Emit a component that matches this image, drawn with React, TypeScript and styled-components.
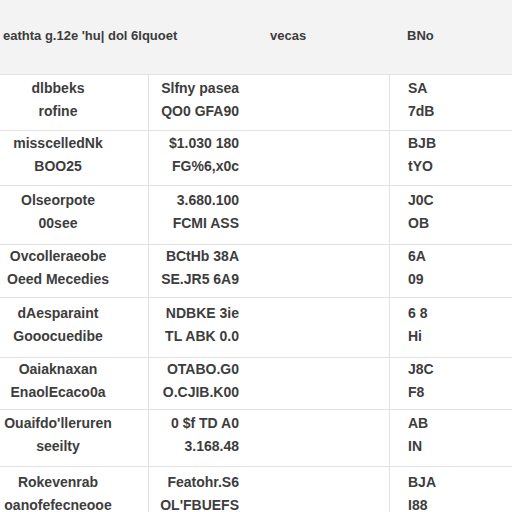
import React from "react";
import styled, { createGlobalStyle } from "styled-components";

const Global = createGlobalStyle`
  html, body { margin: 0; padding: 0; background: #ffffff; }
  body { font-family: "Liberation Sans", Arial, sans-serif; }
  #root { width: 512px; height: 512px; overflow: hidden; }
`;

const Page = styled.div`
  width: 512px;
  height: 512px;
  overflow: hidden;
  background: #ffffff;
`;

const Grid = `
  display: grid;
  grid-template-columns: 149px 241px 1fr;
`;

const Header = styled.div`
  ${Grid}
  height: 74px;
  background: #f3f3f3;
  border-bottom: 1px solid #e2e2e2;
  align-items: center;
  color: #3c3c3c;
  font-size: 13px;
  font-weight: 700;
`;

const HeadCell = styled.div<{ $pl: number }>`
  padding-left: ${(p) => p.$pl}px;
  padding-bottom: 4px;
  white-space: nowrap;
  overflow: visible;
`;

const Row = styled.div<{ $h: number }>`
  ${Grid}
  height: ${(p) => p.$h}px;
  border-bottom: 1px solid #e2e2e2;
  box-sizing: border-box;
  color: #3d3d3d;
  font-size: 14px;
  font-weight: 700;
  line-height: 23px;
`;

const Cell = styled.div<{ $align: "center" | "right" | "left"; $pl?: number; $pr?: number; $last?: boolean }>`
  display: flex;
  flex-direction: column;
  justify-content: center;
  text-align: ${(p) => p.$align};
  padding-left: ${(p) => p.$pl ?? 0}px;
  padding-right: ${(p) => p.$pr ?? 0}px;
  padding-bottom: 6px;
  border-right: ${(p) => (p.$last ? "none" : "1px solid #e2e2e2")};
  white-space: nowrap;
`;

const Line = styled.span`
  display: block;
`;

type R = { h: number; a: [string, string]; b: [string, string]; c: [string, string] };

const rows: R[] = [
  { h: 56, a: ["dlbbeks", "rofine"], b: ["Slfny pasea", "QO0 GFA90"], c: ["SA", "7dB"] },
  { h: 55, a: ["misscelledNk", "BOO25"], b: ["$1.030 180", "FG%6,x0c"], c: ["BJB", "tYO"] },
  { h: 59, a: ["Olseorpote", "00see"], b: ["3.680.100", "FCMI ASS"], c: ["J0C", "OB"] },
  { h: 53, a: ["Ovcolleraeobe", "Oeed Mecedies"], b: ["BCtHb 38A", "SE.JR5 6A9"], c: ["6A", "09"] },
  { h: 60, a: ["dAesparaint", "Gooocuedibe"], b: ["NDBKE 3ie", "TL ABK 0.0"], c: ["6 8", "Hi"] },
  { h: 52, a: ["Oaiaknaxan", "EnaolEcaco0a"], b: ["OTABO.G0", "O.CJIB.K00"], c: ["J8C", "F8"] },
  { h: 57, a: ["Ouaifdo'lleruren", "seeilty"], b: ["0 $f TD A0", "3.168.48"], c: ["AB", "IN"] },
  { h: 60, a: ["Rokevenrab", "oanofefecneooe"], b: ["Featohr.S6", "OL'FBUEFS"], c: ["BJA", "I88"] },
];

export default function App() {
  return (
    <Page>
      <Global />
      <Header>
        <HeadCell $pl={3}>eathta g.12e 'hu| dol 6lquoet</HeadCell>
        <HeadCell $pl={121}>vecas</HeadCell>
        <HeadCell $pl={17}>BNo</HeadCell>
      </Header>
      {rows.map((r, i) => (
        <Row key={i} $h={r.h}>
          <Cell $align="center" $pr={32}>
            <Line>{r.a[0]}</Line>
            <Line>{r.a[1]}</Line>
          </Cell>
          <Cell $align="right" $pr={150}>
            <Line>{r.b[0]}</Line>
            <Line>{r.b[1]}</Line>
          </Cell>
          <Cell $align="left" $pl={18} $last>
            <Line>{r.c[0]}</Line>
            <Line>{r.c[1]}</Line>
          </Cell>
        </Row>
      ))}
    </Page>
  );
}
